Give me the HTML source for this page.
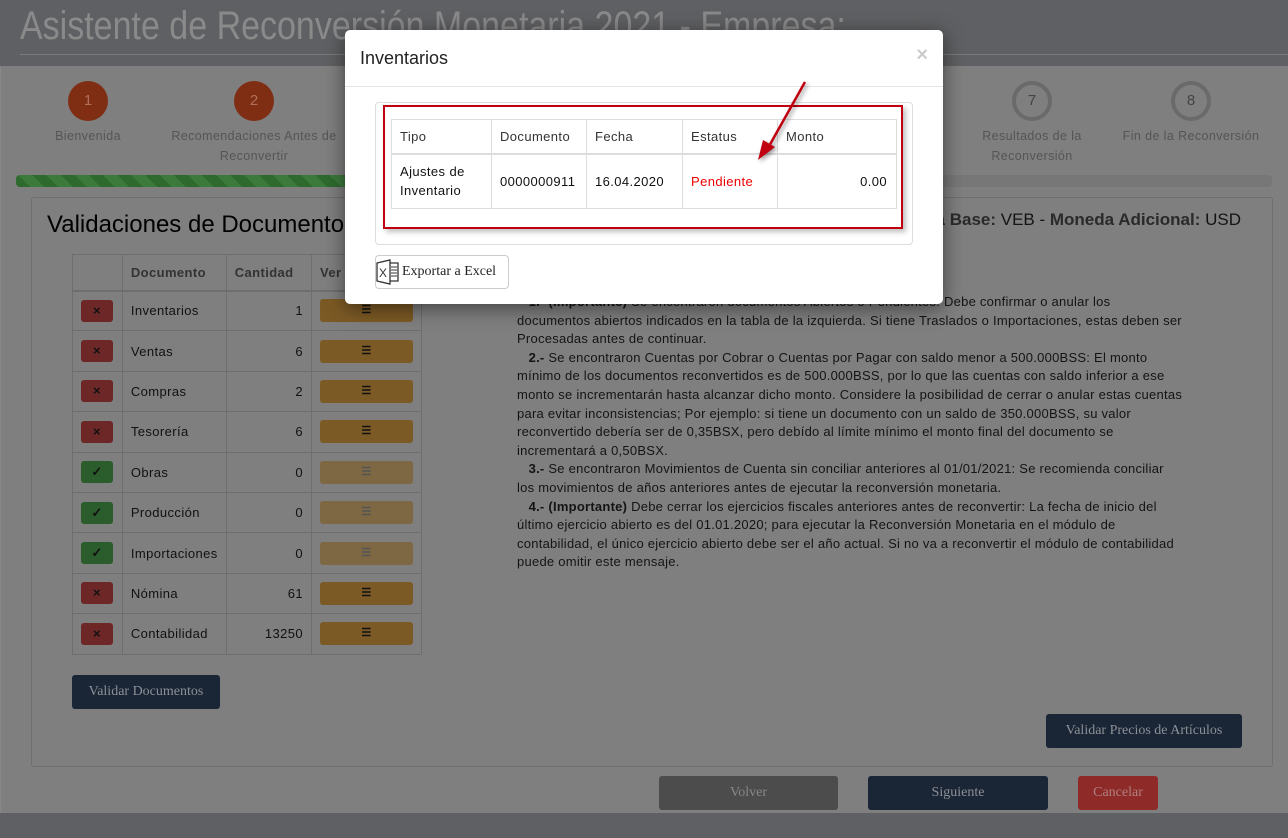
<!DOCTYPE html>
<html><head><meta charset="utf-8"><style>
*{box-sizing:border-box;margin:0;padding:0}
body{width:1288px;height:838px;overflow:hidden;background:#7f7f7f;font-family:"Liberation Sans",sans-serif;position:relative}
.abs{position:absolute}
.hdr{left:0;top:0;width:1288px;height:66px;background:#5f6063}
.hdr h1{position:absolute;left:20px;top:4px;font-weight:normal;font-size:40px;color:#8a8a8b;white-space:nowrap;transform:scaleX(0.85);transform-origin:0 0}
.hdr .ln{position:absolute;left:20px;top:54px;width:1268px;height:1px;background:#7a7a7c}
.circ{width:40px;height:40px;border-radius:50%;text-align:center;line-height:40px;font-size:15px}
.c1{background:#7f2e14;color:#b0705a}
.c2{background:#7f7f7f;border:4px solid #6a6a6a;color:#444;line-height:32px}
.lbl{font-size:12.5px;color:#555;text-align:center;line-height:20px;letter-spacing:0.4px}
.panel{left:31px;top:197px;width:1242px;height:570px;border:1px solid #6e6e6e;border-radius:3px}
table{border-collapse:collapse}
.lt td,.lt th{border:1px solid #6e6e6e;font-size:13px;color:#111;padding:0 8px;letter-spacing:0.4px}
.lt th{color:#333;text-align:left;height:36px;border-bottom:2px solid #6e6e6e}
.lt td{height:40.4px}
.xb{width:32px;height:22px;border-radius:3px;background:#6d2727;color:#111;text-align:center;line-height:22px;font-size:13px;font-weight:bold}
.ok{background:#2b5c2b}
.ob{width:93px;height:23px;border-radius:3px;background:#7c5a25;text-align:center;line-height:23px;font-size:11px;color:#111;font-weight:bold}
.ob.l{background:#7e6743;color:#555}
.p{font-size:13px;color:#141414;line-height:18.6px;white-space:nowrap;letter-spacing:0.25px}
.btn{font-family:"Liberation Serif",serif;font-size:14px;color:#8c9097;text-align:center;border-radius:3px}
.modal{left:345px;top:30px;width:598px;height:274px;background:#fff;border-radius:5px;box-shadow:0 4px 20px rgba(0,0,0,.5)}
.mt td,.mt th{border:1px solid #ddd;font-size:13px;color:#111;padding:0 8px;text-align:left;letter-spacing:0.4px}
.mt th{color:#333;font-weight:normal;height:34px;border-bottom:2px solid #ddd}
.mt td{height:55px}
</style></head><body>
<div class="abs hdr"><h1>Asistente de Reconversión Monetaria 2021 - Empresa:</h1><div class="ln"></div></div>
<div class="abs" style="left:0;top:66px;width:1288px;height:747px;background:#7f7f7f;border-left:1px solid #888"></div>
<div class="abs circ c1" style="left:68px;top:81px">1</div>
<div class="abs lbl" style="left:28px;top:126px;width:120px">Bienvenida</div>
<div class="abs circ c1" style="left:234px;top:81px">2</div>
<div class="abs lbl" style="left:164px;top:126px;width:180px">Recomendaciones Antes de Reconvertir</div>
<div class="abs circ c2" style="left:1012px;top:81px">7</div>
<div class="abs lbl" style="left:972px;top:126px;width:120px">Resultados de la Reconversión</div>
<div class="abs circ c2" style="left:1171px;top:81px">8</div>
<div class="abs lbl" style="left:1106px;top:126px;width:170px">Fin de la Reconversión</div>
<div class="abs" style="left:16px;top:175px;width:1256px;height:12px;border-radius:4px;background:#777"></div>
<div class="abs" style="left:16px;top:175px;width:400px;height:12px;border-radius:4px;background:repeating-linear-gradient(45deg,#2e6a2e 0 10px,#3c7a3c 10px 20px)"></div>
<div class="abs panel"></div>
<div class="abs" style="left:47px;top:211px;font-size:24px;color:#000;white-space:nowrap">Validaciones de Documentos</div>
<div class="abs" style="right:47px;top:210px;font-size:17px;color:#141414;white-space:nowrap"><b style="color:#2a2a2a">Moneda Base:</b> VEB - <b style="color:#2a2a2a">Moneda Adicional:</b> USD</div>
<table class="abs lt" style="left:72px;top:254px;width:350px">
<tr><th style="width:50px"></th><th style="width:102px">Documento</th><th style="width:87px">Cantidad</th><th>Ver</th></tr>
<tr><td><div class="xb">×</div></td><td>Inventarios</td><td style="text-align:right">1</td><td><div class="ob">☰</div></td></tr>
<tr><td><div class="xb">×</div></td><td>Ventas</td><td style="text-align:right">6</td><td><div class="ob">☰</div></td></tr>
<tr><td><div class="xb">×</div></td><td>Compras</td><td style="text-align:right">2</td><td><div class="ob">☰</div></td></tr>
<tr><td><div class="xb">×</div></td><td>Tesorería</td><td style="text-align:right">6</td><td><div class="ob">☰</div></td></tr>
<tr><td><div class="xb ok">✓</div></td><td>Obras</td><td style="text-align:right">0</td><td><div class="ob l">☰</div></td></tr>
<tr><td><div class="xb ok">✓</div></td><td>Producción</td><td style="text-align:right">0</td><td><div class="ob l">☰</div></td></tr>
<tr><td><div class="xb ok">✓</div></td><td>Importaciones</td><td style="text-align:right">0</td><td><div class="ob l">☰</div></td></tr>
<tr><td><div class="xb">×</div></td><td>Nómina</td><td style="text-align:right">61</td><td><div class="ob">☰</div></td></tr>
<tr><td><div class="xb">×</div></td><td>Contabilidad</td><td style="text-align:right">13250</td><td><div class="ob">☰</div></td></tr>
</table>
<div class="abs p" style="left:517px;top:293px">
&nbsp;&nbsp;&nbsp;<b>1.- (Importante)</b> Se encontraron documentos Abiertos o Pendientes: Debe confirmar o anular los<br>
documentos abiertos indicados en la tabla de la izquierda. Si tiene Traslados o Importaciones, estas deben ser<br>
Procesadas antes de continuar.<br>
&nbsp;&nbsp;&nbsp;<b>2.-</b> Se encontraron Cuentas por Cobrar o Cuentas por Pagar con saldo menor a 500.000BSS: El monto<br>
mínimo de los documentos reconvertidos es de 500.000BSS, por lo que las cuentas con saldo inferior a ese<br>
monto se incrementarán hasta alcanzar dicho monto. Considere la posibilidad de cerrar o anular estas cuentas<br>
para evitar inconsistencias; Por ejemplo: si tiene un documento con un saldo de 350.000BSS, su valor<br>
reconvertido debería ser de 0,35BSX, pero debído al límite mínimo el monto final del documento se<br>
incrementará a 0,50BSX.<br>
&nbsp;&nbsp;&nbsp;<b>3.-</b> Se encontraron Movimientos de Cuenta sin conciliar anteriores al 01/01/2021: Se recomienda conciliar<br>
los movimientos de años anteriores antes de ejecutar la reconversión monetaria.<br>
&nbsp;&nbsp;&nbsp;<b>4.- (Importante)</b> Debe cerrar los ejercicios fiscales anteriores antes de reconvertir: La fecha de inicio del<br>
último ejercicio abierto es del 01.01.2020; para ejecutar la Reconversión Monetaria en el módulo de<br>
contabilidad, el único ejercicio abierto debe ser el año actual. Si no va a reconvertir el módulo de contabilidad<br>
puede omitir este mensaje.</div>
<div class="abs btn" style="left:72px;top:675px;width:148px;height:34px;line-height:34px;background:#1a2535">Validar Documentos</div>
<div class="abs btn" style="left:1046px;top:714px;width:196px;height:34px;line-height:34px;background:#1a2535">Validar Precios de Artículos</div>
<div class="abs btn" style="left:659px;top:776px;width:179px;height:34px;line-height:34px;background:#4c4c4c;color:#888">Volver</div>
<div class="abs btn" style="left:868px;top:776px;width:180px;height:34px;line-height:34px;background:#1a2535">Siguiente</div>
<div class="abs btn" style="left:1078px;top:776px;width:80px;height:34px;line-height:34px;background:#8e2a28;color:#b08080">Cancelar</div>
<div class="abs" style="left:0;top:813px;width:1288px;height:25px;background:#5f6063"></div>

<div class="abs modal">
<div class="abs" style="left:15px;top:18px;font-size:18px;color:#222">Inventarios</div>
<div class="abs" style="right:15px;top:14px;font-size:20px;font-weight:bold;color:#ccc">×</div>
<div class="abs" style="left:0;top:56px;width:598px;height:1px;background:#e5e5e5"></div>
<div class="abs" style="left:30px;top:72px;width:538px;height:143px;border:1px solid #ddd;border-radius:4px"></div>
<div class="abs" style="left:38px;top:75px;width:520px;height:124px;border:2px solid #c00010;box-shadow:3px 3px 5px rgba(0,0,0,.25)"></div>
<table class="abs mt" style="left:46px;top:89px;width:506px">
<tr><th style="width:100px">Tipo</th><th style="width:95px">Documento</th><th style="width:96px">Fecha</th><th style="width:95px">Estatus</th><th>Monto</th></tr>
<tr><td style="line-height:19px">Ajustes de Inventario</td><td>0000000911</td><td>16.04.2020</td><td style="color:#e00">Pendiente</td><td style="text-align:right;padding-right:9px">0.00</td></tr>
</table>
<div class="abs" style="left:30px;top:225px;width:134px;height:34px;border:1px solid #ccc;border-radius:4px;font-family:'Liberation Serif',serif;font-size:14px;color:#222;line-height:32px;padding-left:26px">Exportar a Excel</div>
<svg class="abs" style="left:31px;top:229px" width="24" height="26" viewBox="0 0 24 26"><path d="M1 4 L14 1 L14 25 L1 22 Z" fill="#fff" stroke="#333" stroke-width="1.3"/><path d="M14 4 H22 V22 H14" fill="none" stroke="#333" stroke-width="1.3"/><path d="M15 8h6M15 11h6M15 14h6M15 17h6" stroke="#333"/><text x="3" y="18" font-size="12" font-family="Liberation Sans" fill="#333">X</text></svg>
</div>
<svg class="abs" style="left:0;top:0" width="1288" height="838"><g filter="drop-shadow(2px 2px 2px rgba(0,0,0,.4))"><line x1="805" y1="82" x2="768" y2="148" stroke="#c00010" stroke-width="2.5"/><path d="M758 160 L763 140 L775 147 Z" fill="#c00010"/></g></svg>
</body></html>
